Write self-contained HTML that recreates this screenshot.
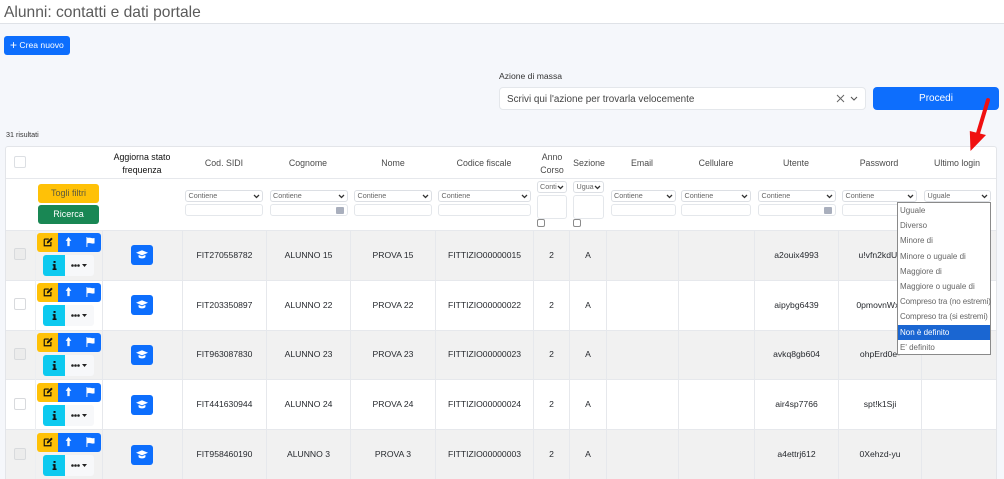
<!DOCTYPE html>
<html lang="it"><head><meta charset="utf-8"><title>Alunni</title>
<style>
*{box-sizing:border-box}
html,body{margin:0;padding:0}
body{width:1004px;height:479px;overflow:hidden;background:#f5f7fb;position:relative;font-family:"Liberation Sans",sans-serif;color:#333;filter:blur(.3px)}
.a{position:absolute}
.t{position:absolute;white-space:nowrap;text-align:center;transform:translateX(-50%);font-size:8.6px;line-height:11px;color:#26292e}
.h{position:absolute;text-align:center;transform:translateX(-50%);font-size:8.8px;line-height:12.5px;color:#4a4a4a;white-space:nowrap}
.sel{position:absolute;height:12px;background:#fff;border:1px solid #dcdfe4;border-radius:3px;font-size:7.2px;line-height:10px;padding-left:2.5px;color:#666;overflow:hidden;white-space:nowrap}
.sel svg{position:absolute;right:2px;top:3px}
.inp{position:absolute;height:12px;background:#fff;border:1px solid #e4e7eb;border-radius:3px}
.cal{position:absolute;right:3px;top:2px;width:8px;height:7px;background:#a9afbd;border-radius:1px}
.v{position:absolute;top:230px;width:1px;height:249px;background:#e6e8ec}
.row{position:absolute;left:6px;width:990px;height:50px;border-top:1px solid #e6e8ec}
.g{background:#f1f1f1}.w{background:#fff}
.cb{position:absolute;left:14px;width:12px;height:12px;background:#fff;border:1px solid #d8dadd;border-radius:2px}
.g2{background:#ececec}
.y{position:absolute;left:37px;width:21px;height:19px;background:#ffc107;border-radius:3px 0 0 3px}
.b{position:absolute;left:58px;width:43px;height:19px;background:#0d6efd;border-radius:0 3px 3px 0}
.c{position:absolute;left:43px;width:22px;height:21px;background:#0dcaf0;border-radius:3px 0 0 3px}
.m{position:absolute;left:65px;width:29px;height:21px;background:#f7f8fa;border-radius:0 3px 3px 0}
.cap{position:absolute;left:131px;width:22px;height:20px;background:#0d6efd;border-radius:3px}
.a svg,.y svg,.b svg,.c svg,.m svg,.cap svg{position:absolute}
.o{position:absolute;left:2px;font-size:8px;line-height:15.2px;color:#666;white-space:nowrap}
</style></head><body>
<svg width="0" height="0" style="position:absolute"><defs>
<symbol id="chev" viewBox="0 0 8 6"><path d="M1 1.2 4 4.2 7 1.2" fill="none" stroke="#333" stroke-width="1.5"/></symbol>
<symbol id="edit" viewBox="0 0 12 12"><path d="M1.500 2.500h5.500M1.500 2.500v8h8V6" fill="none" stroke="#111" stroke-width="1.400"/><path d="M4.500 8 5 5.600 10 .8l1.600 1.600-5 4.900z" fill="#111"/></symbol>
<symbol id="up" viewBox="0 0 8 12"><path d="M4 0 7.500 4.600H5.400V11H2.600V4.600H.5z" fill="#fff"/></symbol>
<symbol id="flag" viewBox="0 0 10 11"><path d="M.5 0h1v11h-1zM1.500 1c3-1.200 4.500 1 8 0v6c-3.500 1-5-1.200-8 0z" fill="#fff"/></symbol>
<symbol id="i" viewBox="0 0 6 11"><path d="M1.800 0h2.500v2.300H1.800zM.8 3.800h3.500v5.400h1.200V11H.6V9.200h1.200V5.600H.8z" fill="#111"/></symbol>
<symbol id="dots" viewBox="0 0 16 5"><circle cx="1.500" cy="2.500" r="1.300" fill="#222"/><circle cx="4.500" cy="2.500" r="1.300" fill="#222"/><circle cx="7.500" cy="2.500" r="1.300" fill="#222"/><path d="M11 1h5l-2.500 3z" fill="#222"/></symbol>
<symbol id="capg" viewBox="0 0 14 10"><path d="M7 0 14 3 7 6 0 3z" fill="#fff"/><path d="M3 5.500 7 7.200 11 5.500V8c-2 2-6 2-8 0z" fill="#fff"/></symbol>
</defs></svg>

<div class="a" style="left:0;top:0;width:1004px;height:24px;background:#fff;border-bottom:1px solid #dfe2e7"></div>
<div class="a" style="left:4px;top:3px;font-size:15.600px;line-height:20px;color:#5a5a5a;white-space:nowrap">Alunni: contatti e dati portale</div>

<div class="a" style="left:4px;top:36px;width:66px;height:19px;background:#0d6efd;border-radius:3px;color:#fff;font-size:8.600px;line-height:19px;padding-left:6px;white-space:nowrap"><span style="font-size:12px;line-height:17px;vertical-align:-1px">+</span> Crea nuovo</div>

<div class="a" style="left:499px;top:71px;font-size:8.600px;line-height:11px;color:#333;white-space:nowrap">Azione di massa</div>
<div class="a" style="left:499px;top:87px;width:367px;height:23px;background:#fff;border:1px solid #e4e7eb;border-radius:4px;font-size:9.900px;line-height:23px;padding-left:7px;color:#444;white-space:nowrap">Scrivi qui l'azione per trovarla velocemente
<svg style="position:absolute;left:336px;top:6px" width="9" height="9" viewBox="0 0 9 9"><path d="M1 1 8 8M8 1 1 8" stroke="#666" stroke-width="1"/></svg>
<svg style="position:absolute;left:350px;top:8px" width="8" height="6" viewBox="0 0 8 6"><path d="M1 1 4 4 7 1" fill="none" stroke="#555" stroke-width="1.100"/></svg></div>
<div class="a" style="left:873px;top:87px;width:126px;height:23px;background:#0d6efd;border-radius:4px;color:#fff;font-size:10px;line-height:24px;text-align:center">Procedi</div>

<div class="a" style="left:6px;top:130px;font-size:7.200px;line-height:10px;color:#333;white-space:nowrap">31 risultati</div>

<div class="a" style="left:5px;top:146px;width:992px;height:333px;background:#fff;border:1px solid #e3e5e9;border-bottom:0;border-radius:3px 3px 0 0"></div>
<div class="a" style="left:6px;top:178px;width:990px;height:1px;background:#e6e8ec"></div>

<div class="cb" style="top:156px;border-color:#dcdfe3"></div>
<div class="h" style="left:142px;top:151px;color:#111">Aggiorna stato<br>frequenza</div>
<div class="h" style="left:224px;top:157px">Cod. SIDI</div>
<div class="h" style="left:308px;top:157px">Cognome</div>
<div class="h" style="left:393px;top:157px">Nome</div>
<div class="h" style="left:484px;top:157px">Codice fiscale</div>
<div class="h" style="left:552px;top:151px">Anno<br>Corso</div>
<div class="h" style="left:589px;top:157px">Sezione</div>
<div class="h" style="left:642px;top:157px">Email</div>
<div class="h" style="left:716px;top:157px">Cellulare</div>
<div class="h" style="left:796px;top:157px">Utente</div>
<div class="h" style="left:879px;top:157px">Password</div>
<div class="h" style="left:957px;top:157px">Ultimo login</div>

<div class="a" style="left:38px;top:184px;width:61px;height:19px;background:#ffc107;border-radius:3px;color:#5c5a3e;font-size:9px;line-height:18px;text-align:center">Togli filtri</div>
<div class="a" style="left:38px;top:205px;width:61px;height:19px;background:#198754;border-radius:3px;color:#fff;font-size:9px;line-height:19px;text-align:center">Ricerca</div>

<div class="sel" style="left:185px;top:190px;width:78px">Contiene<svg width="7" height="5"><use href="#chev"/></svg></div><div class="inp" style="left:185px;top:204px;width:78px"></div>
<div class="sel" style="left:269.500px;top:190px;width:78px">Contiene<svg width="7" height="5"><use href="#chev"/></svg></div><div class="inp" style="left:269.500px;top:204px;width:78px"><div class="cal"></div></div>
<div class="sel" style="left:354px;top:190px;width:78px">Contiene<svg width="7" height="5"><use href="#chev"/></svg></div><div class="inp" style="left:354px;top:204px;width:78px"></div>
<div class="sel" style="left:438px;top:190px;width:93px">Contiene<svg width="7" height="5"><use href="#chev"/></svg></div><div class="inp" style="left:438px;top:204px;width:93px"></div>
<div class="sel" style="left:536.500px;top:181px;width:30.500px">Conti<svg width="7" height="5"><use href="#chev"/></svg></div><div class="inp" style="left:536.500px;top:195px;width:30.500px;height:23.500px"></div>
<div class="a" style="left:536.500px;top:219px;width:8px;height:8px;background:#fff;border:1px solid #8b8b8b;border-radius:2px"></div>
<div class="sel" style="left:573px;top:181px;width:31px">Ugua<svg width="7" height="5"><use href="#chev"/></svg></div><div class="inp" style="left:573px;top:195px;width:31px;height:23.500px"></div>
<div class="a" style="left:573px;top:219px;width:8px;height:8px;background:#fff;border:1px solid #8b8b8b;border-radius:2px"></div>
<div class="sel" style="left:610.500px;top:190px;width:65px">Contiene<svg width="7" height="5"><use href="#chev"/></svg></div><div class="inp" style="left:610.500px;top:204px;width:65px"></div>
<div class="sel" style="left:681px;top:190px;width:70px">Contiene<svg width="7" height="5"><use href="#chev"/></svg></div><div class="inp" style="left:681px;top:204px;width:70px"></div>
<div class="sel" style="left:758px;top:190px;width:78px">Contiene<svg width="7" height="5"><use href="#chev"/></svg></div><div class="inp" style="left:758px;top:204px;width:78px"><div class="cal"></div></div>
<div class="sel" style="left:842px;top:190px;width:75px">Contiene<svg width="7" height="5"><use href="#chev"/></svg></div><div class="inp" style="left:842px;top:204px;width:75px"></div>
<div class="sel" style="left:924px;top:190px;width:67px">Uguale<svg width="7" height="5"><use href="#chev"/></svg></div>

<div class="row g" style="top:230px"></div>
<div class="row w" style="top:279.800px"></div>
<div class="row g" style="top:329.600px"></div>
<div class="row w" style="top:379.400px"></div>
<div class="row g" style="top:429.200px;height:50px"></div>

<div class="v" style="left:35px;background:#eceef1"></div><div class="v" style="left:102px"></div><div class="v" style="left:182px"></div><div class="v" style="left:266px"></div><div class="v" style="left:350px"></div><div class="v" style="left:435px"></div><div class="v" style="left:533px"></div><div class="v" style="left:569px"></div><div class="v" style="left:606px"></div><div class="v" style="left:678px"></div><div class="v" style="left:754px"></div><div class="v" style="left:838px"></div><div class="v" style="left:921px"></div>

<!-- row 1 -->
<div class="cb g2" style="top:248px"></div>
<div class="y" style="top:233px"><svg style="left:6px;top:4px" width="10" height="10"><use href="#edit"/></svg></div>
<div class="b" style="top:233px"><svg style="left:7px;top:4px" width="7" height="10"><use href="#up"/></svg><svg style="left:28px;top:4px" width="9" height="10"><use href="#flag"/></svg></div>
<div class="c" style="top:255px"><svg style="left:8.500px;top:6px" width="5" height="9"><use href="#i"/></svg></div>
<div class="m" style="top:255px"><svg style="left:6px;top:8px" width="16" height="5"><use href="#dots"/></svg></div>
<div class="cap" style="top:245px"><svg style="left:5px;top:5px" width="12" height="9"><use href="#capg"/></svg></div>
<div class="t" style="left:224.500px;top:250px">FIT270558782</div><div class="t" style="left:308.500px;top:250px">ALUNNO 15</div><div class="t" style="left:393px;top:250px">PROVA 15</div><div class="t" style="left:484.500px;top:250px">FITTIZIO00000015</div><div class="t" style="left:551.500px;top:250px">2</div><div class="t" style="left:588px;top:250px">A</div><div class="t" style="left:796.500px;top:250px">a2ouix4993</div><div class="t" style="left:880px;top:250px">u!vfn2kdUx</div>

<!-- row 2 -->
<div class="cb" style="top:298px"></div>
<div class="y" style="top:283px"><svg style="left:6px;top:4px" width="10" height="10"><use href="#edit"/></svg></div>
<div class="b" style="top:283px"><svg style="left:7px;top:4px" width="7" height="10"><use href="#up"/></svg><svg style="left:28px;top:4px" width="9" height="10"><use href="#flag"/></svg></div>
<div class="c" style="top:305px"><svg style="left:8.500px;top:6px" width="5" height="9"><use href="#i"/></svg></div>
<div class="m" style="top:305px"><svg style="left:6px;top:8px" width="16" height="5"><use href="#dots"/></svg></div>
<div class="cap" style="top:295px"><svg style="left:5px;top:5px" width="12" height="9"><use href="#capg"/></svg></div>
<div class="t" style="left:224.500px;top:300px">FIT203350897</div><div class="t" style="left:308.500px;top:300px">ALUNNO 22</div><div class="t" style="left:393px;top:300px">PROVA 22</div><div class="t" style="left:484.500px;top:300px">FITTIZIO00000022</div><div class="t" style="left:551.500px;top:300px">2</div><div class="t" style="left:588px;top:300px">A</div><div class="t" style="left:796.500px;top:300px">aipybg6439</div><div class="t" style="left:880px;top:300px">0pmovnWxx</div>

<!-- row 3 -->
<div class="cb g2" style="top:348px"></div>
<div class="y" style="top:333px"><svg style="left:6px;top:4px" width="10" height="10"><use href="#edit"/></svg></div>
<div class="b" style="top:333px"><svg style="left:7px;top:4px" width="7" height="10"><use href="#up"/></svg><svg style="left:28px;top:4px" width="9" height="10"><use href="#flag"/></svg></div>
<div class="c" style="top:355px"><svg style="left:8.500px;top:6px" width="5" height="9"><use href="#i"/></svg></div>
<div class="m" style="top:355px"><svg style="left:6px;top:8px" width="16" height="5"><use href="#dots"/></svg></div>
<div class="cap" style="top:345px"><svg style="left:5px;top:5px" width="12" height="9"><use href="#capg"/></svg></div>
<div class="t" style="left:224.500px;top:349px">FIT963087830</div><div class="t" style="left:308.500px;top:349px">ALUNNO 23</div><div class="t" style="left:393px;top:349px">PROVA 23</div><div class="t" style="left:484.500px;top:349px">FITTIZIO00000023</div><div class="t" style="left:551.500px;top:349px">2</div><div class="t" style="left:588px;top:349px">A</div><div class="t" style="left:796.500px;top:349px">avkq8gb604</div><div class="t" style="left:880px;top:349px">ohpErd0e-</div>

<!-- row 4 -->
<div class="cb" style="top:398px"></div>
<div class="y" style="top:382.500px"><svg style="left:6px;top:4px" width="10" height="10"><use href="#edit"/></svg></div>
<div class="b" style="top:382.500px"><svg style="left:7px;top:4px" width="7" height="10"><use href="#up"/></svg><svg style="left:28px;top:4px" width="9" height="10"><use href="#flag"/></svg></div>
<div class="c" style="top:405px"><svg style="left:8.500px;top:6px" width="5" height="9"><use href="#i"/></svg></div>
<div class="m" style="top:405px"><svg style="left:6px;top:8px" width="16" height="5"><use href="#dots"/></svg></div>
<div class="cap" style="top:394.500px"><svg style="left:5px;top:5px" width="12" height="9"><use href="#capg"/></svg></div>
<div class="t" style="left:224.500px;top:399px">FIT441630944</div><div class="t" style="left:308.500px;top:399px">ALUNNO 24</div><div class="t" style="left:393px;top:399px">PROVA 24</div><div class="t" style="left:484.500px;top:399px">FITTIZIO00000024</div><div class="t" style="left:551.500px;top:399px">2</div><div class="t" style="left:588px;top:399px">A</div><div class="t" style="left:796.500px;top:399px">air4sp7766</div><div class="t" style="left:880px;top:399px">spt!k1Sji</div>

<!-- row 5 -->
<div class="cb g2" style="top:448px"></div>
<div class="y" style="top:432.500px"><svg style="left:6px;top:4px" width="10" height="10"><use href="#edit"/></svg></div>
<div class="b" style="top:432.500px"><svg style="left:7px;top:4px" width="7" height="10"><use href="#up"/></svg><svg style="left:28px;top:4px" width="9" height="10"><use href="#flag"/></svg></div>
<div class="c" style="top:455px"><svg style="left:8.500px;top:6px" width="5" height="9"><use href="#i"/></svg></div>
<div class="m" style="top:455px"><svg style="left:6px;top:8px" width="16" height="5"><use href="#dots"/></svg></div>
<div class="cap" style="top:444.500px"><svg style="left:5px;top:5px" width="12" height="9"><use href="#capg"/></svg></div>
<div class="t" style="left:224.500px;top:449px">FIT958460190</div><div class="t" style="left:308.500px;top:449px">ALUNNO 3</div><div class="t" style="left:393px;top:449px">PROVA 3</div><div class="t" style="left:484.500px;top:449px">FITTIZIO00000003</div><div class="t" style="left:551.500px;top:449px">2</div><div class="t" style="left:588px;top:449px">A</div><div class="t" style="left:796.500px;top:449px">a4ettrj612</div><div class="t" style="left:880px;top:449px">0Xehzd-yu</div>

<!-- dropdown -->
<div class="a" style="left:897px;top:202px;width:94px;height:153px;background:#fff;border:1px solid #8a8a8a">
<div class="a" style="left:0;top:121.500px;width:92px;height:15px;background:#1a66d2"></div>
<div class="o" style="top:0">Uguale</div>
<div class="o" style="top:15.200px">Diverso</div>
<div class="o" style="top:30.400px">Minore di</div>
<div class="o" style="top:45.600px">Minore o uguale di</div>
<div class="o" style="top:60.800px">Maggiore di</div>
<div class="o" style="top:76px">Maggiore o uguale di</div>
<div class="o" style="top:91.200px;letter-spacing:-.1px">Compreso tra (no estremi)</div>
<div class="o" style="top:106.400px;letter-spacing:-.1px">Compreso tra (si estremi)</div>
<div class="o" style="top:121.600px;color:#fff">Non è definito</div>
<div class="o" style="top:136.800px">E' definito</div>
</div>

<!-- arrow -->
<svg class="a" style="left:960px;top:95px" width="40" height="60" viewBox="0 0 40 60"><path d="M28 5 17.500 40" stroke="#f01010" stroke-width="4" stroke-linecap="round" fill="none"/><path d="M10.500 56 9.800 36 26 40z" fill="#f01010"/></svg>
</body></html>
